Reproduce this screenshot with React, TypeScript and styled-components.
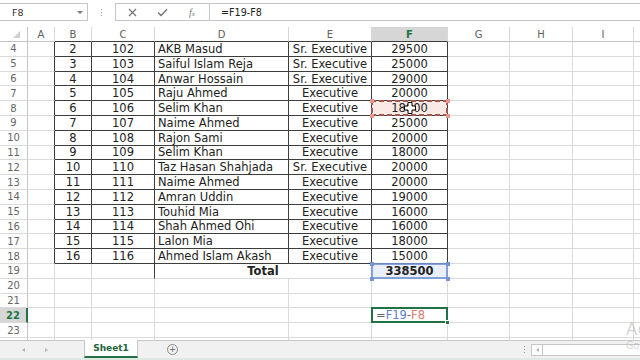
import React from 'react';
import styled, { createGlobalStyle, css } from 'styled-components';

const DARK = '#3d3d3d';
const GRID = '#dadada';
const GREEN = '#217346';
const BLUE = '#7394d6';
const RED = '#a5564f';
const RED_LIGHT = '#e8958c';

const GlobalStyle = createGlobalStyle`
  html, body { margin: 0; padding: 0; background: #fff; }
  body { font-family: "DejaVu Sans", "Liberation Sans", sans-serif; }
`;

const Window = styled.div`
  position: relative;
  width: 640px;
  height: 360px;
  overflow: hidden;
  display: flex;
  flex-direction: column;
  background: #fff;
`;

/* ---------- formula bar ---------- */
const FormulaBar = styled.div`
  height: 27px;
  flex-shrink: 0;
  box-sizing: border-box;
  padding-top: 3px;
  display: flex;
  align-items: flex-start;
`;

const NameBox = styled.div`
  width: 88px;
  height: 18px;
  box-sizing: border-box;
  border: 1px solid #c6c6c6;
  border-left: none;
  display: flex;
  align-items: center;
  justify-content: space-between;
  padding: 0 4px 0 12px;
  font-size: 9.5px;
  color: #333;
`;

const Caret = styled.span`
  width: 0;
  height: 0;
  border-left: 3px solid transparent;
  border-right: 3px solid transparent;
  border-top: 3px solid #777;
`;

const Grip = styled.div`
  width: 27px;
  height: 18px;
  display: flex;
  flex-direction: column;
  align-items: center;
  justify-content: center;
  gap: 2px;
`;

const GripDot = styled.span`
  width: 1px;
  height: 1px;
  background: #9a9a9a;
`;

const FxBox = styled.div`
  width: 95px;
  height: 18px;
  box-sizing: border-box;
  border: 1px solid #c6c6c6;
  display: flex;
  align-items: center;
  padding-left: 8px;
  gap: 14px;
`;

const FxIcon = styled.span`
  width: 16px;
  height: 16px;
  display: flex;
  align-items: center;
  justify-content: center;
  color: #777;
  font-family: "Liberation Serif", "DejaVu Serif", serif;
  font-style: italic;
  font-size: 10px;
`;

const FxSub = styled.span`
  font-size: 7px;
  margin-top: 3px;
`;

const FormulaInput = styled.div`
  flex: 1;
  height: 18px;
  box-sizing: border-box;
  border-top: 1px solid #c6c6c6;
  border-bottom: 1px solid #c6c6c6;
  display: flex;
  align-items: center;
  padding-left: 11px;
  font-size: 9.6px;
  color: #222;
`;

/* ---------- grid ---------- */
const Sheet = styled.div`
  flex: 1;
  min-height: 0;
  overflow: hidden;
  display: grid;
  grid-template-columns: 28px 27px 37px 63px 134px 83px 76px 62px 63px 61px 64px;
  grid-template-rows: 15px;
  grid-auto-rows: 14.8px;
  align-content: start;
`;

const Corner = styled.div`
  position: relative;
  box-sizing: border-box;
  border-right: 1px solid #c4c4c4;
  border-bottom: 1px solid #c4c4c4;
`;

const CornerTri = styled.span`
  position: absolute;
  right: 7px;
  bottom: 3px;
  width: 0;
  height: 0;
  border-left: 7px solid transparent;
  border-bottom: 7px solid #d0d0d0;
`;

const ColHeader = styled.div<{ $active?: boolean; $dark?: boolean }>`
  box-sizing: border-box;
  display: flex;
  align-items: center;
  justify-content: center;
  font-size: 10px;
  color: #606060;
  border-right: 1px solid #d8d8d8;
  border-bottom: 1px solid ${(p) => (p.$dark ? DARK : '#c4c4c4')};
  ${(p) =>
    p.$active &&
    css`
      background: #d6d6d6;
      color: ${GREEN};
      font-weight: 700;
      border-bottom: 1px solid ${DARK};
    `}
`;

const RowHeader = styled.div<{ $active?: boolean }>`
  box-sizing: border-box;
  display: flex;
  align-items: center;
  justify-content: center;
  font-size: 10px;
  color: #666;
  border-right: 1px solid #c4c4c4;
  border-bottom: 1px solid ${GRID};
  ${(p) =>
    p.$active &&
    css`
      background: #d6d6d6;
      color: ${GREEN};
      font-weight: 700;
      border-right: 2px solid ${GREEN};
    `}
`;

type Mark = 'point' | 'ref' | 'active';

const pointEdges = css`
  background:
    repeating-linear-gradient(90deg, ${RED} 0 5px, transparent 5px 8px) top left / 100% 2px no-repeat,
    repeating-linear-gradient(90deg, ${RED} 0 5px, transparent 5px 8px) bottom left / 100% 2px no-repeat,
    repeating-linear-gradient(180deg, ${RED} 0 5px, transparent 5px 8px) top left / 2px 100% no-repeat,
    repeating-linear-gradient(180deg, ${RED} 0 5px, transparent 5px 8px) top right / 2px 100% no-repeat;
`;

const Cell = styled.div<{
  $align?: 'left' | 'center';
  $bold?: boolean;
  $r?: boolean;
  $b?: boolean;
  $span?: number;
  $mark?: Mark;
}>`
  position: relative;
  box-sizing: border-box;
  display: flex;
  align-items: center;
  justify-content: ${(p) => (p.$align === 'left' ? 'flex-start' : 'center')};
  padding: 0 3px;
  grid-column: span ${(p) => p.$span ?? 1};
  border-right: 1px solid ${(p) => (p.$r ? DARK : GRID)};
  border-bottom: 1px solid ${(p) => (p.$b ? DARK : GRID)};
  font-size: 11.5px;
  font-weight: ${(p) => (p.$bold ? 700 : 400)};
  color: #222;
  white-space: nowrap;

  ${(p) =>
    p.$mark === 'point' &&
    css`
      background: #fbe9e6;
      &::after {
        content: '';
        position: absolute;
        top: -1px;
        left: -1px;
        right: -1px;
        bottom: -1px;
        ${pointEdges}
      }
    `}
  ${(p) =>
    p.$mark === 'ref' &&
    css`
      background: #e9eef9;
      &::after {
        content: '';
        position: absolute;
        top: -1px;
        left: -1px;
        right: -1px;
        bottom: -1px;
        border: 2px solid ${BLUE};
        opacity: 0.85;
      }
    `}
  ${(p) =>
    p.$mark === 'active' &&
    css`
      padding-left: 4px;
      &::after {
        content: '';
        position: absolute;
        top: -1px;
        left: -1px;
        right: -1px;
        bottom: -1px;
        border: 2px solid ${GREEN};
      }
    `}
`;

const Handle = styled.span<{ $pos: 'tl' | 'tr' | 'bl' | 'br'; $color: string }>`
  position: absolute;
  z-index: 2;
  width: 4px;
  height: 4px;
  background: ${(p) => p.$color};
  ${(p) => (p.$pos[0] === 't' ? 'top: -2px;' : 'bottom: -3px;')}
  ${(p) => (p.$pos[1] === 'l' ? 'left: -2px;' : 'right: -3px;')}
`;

const FillHandle = styled.span`
  position: absolute;
  z-index: 2;
  right: -3px;
  bottom: -3px;
  width: 5px;
  height: 5px;
  background: ${GREEN};
  border: 1px solid #fff;
  box-sizing: border-box;
`;

const CursorIcon = styled.svg`
  position: absolute;
  z-index: 3;
  left: 32px;
  top: 1px;
`;

const Ref = styled.span<{ $c: string }>`
  color: ${(p) => p.$c};
`;

/* ---------- tab bar ---------- */
const TabBar = styled.div`
  height: 20px;
  flex-shrink: 0;
  box-sizing: border-box;
  background: #f1f1f1;
  border-top: 1px solid #c6c6c6;
  border-bottom: 2px solid #dfe8e2;
  display: flex;
  align-items: stretch;
`;

const Nav = styled.div`
  width: 84px;
  display: flex;
  align-items: center;
  padding-left: 22px;
  gap: 20px;
  box-sizing: border-box;
`;

const NavArrow = styled.span<{ $dir: 'l' | 'r' }>`
  width: 0;
  height: 0;
  border-top: 2.5px solid transparent;
  border-bottom: 2.5px solid transparent;
  ${(p) =>
    p.$dir === 'l'
      ? 'border-right: 3px solid #b4b4b4;'
      : 'border-left: 3px solid #b4b4b4;'}
`;

const SheetTab = styled.div`
  width: 54px;
  margin-top: -1px;
  box-sizing: border-box;
  background: #fff;
  border-left: 1px solid #c6c6c6;
  border-right: 1px solid #c6c6c6;
  border-bottom: 2px solid ${GREEN};
  display: flex;
  align-items: center;
  justify-content: center;
  font-size: 9px;
  font-weight: 700;
  color: #22653c;
`;

const AddSheet = styled.div`
  margin-left: 29px;
  align-self: center;
  width: 11px;
  height: 11px;
  box-sizing: border-box;
  border: 1px solid #8a8a8a;
  border-radius: 50%;
  display: flex;
  align-items: center;
  justify-content: center;
  color: #6a6a6a;
  font-size: 9px;
  line-height: 1;
`;

const Spacer = styled.div`
  flex: 1;
`;

const TabGrip = styled.div`
  width: 14px;
  display: flex;
  flex-direction: column;
  align-items: center;
  justify-content: center;
  gap: 2px;
`;

const HScroll = styled.div`
  width: 109px;
  align-self: center;
  height: 12px;
  box-sizing: border-box;
  border: 1px solid #c6c6c6;
  border-right: none;
  background: #fff;
  display: flex;
  align-items: center;
`;

const ScrollBtn = styled.div`
  width: 11px;
  height: 100%;
  box-sizing: border-box;
  border-right: 1px solid #c6c6c6;
  display: flex;
  align-items: center;
  justify-content: center;
`;

const Watermark = styled.div`
  position: absolute;
  left: 626px;
  top: 317px;
  z-index: 5;
  color: rgba(170, 170, 170, 0.5);
  font-family: "Open Sans", "DejaVu Sans", sans-serif;
  white-space: nowrap;
  pointer-events: none;
`;

const WmTitle = styled.div`
  font-size: 18px;
  line-height: 22px;
`;

const WmSub = styled.div`
  font-size: 10px;
  line-height: 12px;
`;

/* ---------- data ---------- */
const COLS = ['A', 'B', 'C', 'D', 'E', 'F', 'G', 'H', 'I', 'J'];
const TABLE_COLS = ['B', 'C', 'D', 'E', 'F'];

const people: [number, number, string, string, number][] = [
  [2, 102, 'AKB Masud', 'Sr. Executive', 29500],
  [3, 103, 'Saiful Islam Reja', 'Sr. Executive', 25000],
  [4, 104, 'Anwar Hossain', 'Sr. Executive', 29000],
  [5, 105, 'Raju Ahmed', 'Executive', 20000],
  [6, 106, 'Selim Khan', 'Executive', 18000],
  [7, 107, 'Naime Ahmed', 'Executive', 25000],
  [8, 108, 'Rajon Sami', 'Executive', 20000],
  [9, 109, 'Selim Khan', 'Executive', 18000],
  [10, 110, 'Taz Hasan Shahjada', 'Sr. Executive', 20000],
  [11, 111, 'Naime Ahmed', 'Executive', 20000],
  [12, 112, 'Amran Uddin', 'Executive', 19000],
  [13, 113, 'Touhid Mia', 'Executive', 16000],
  [14, 114, 'Shah Ahmed Ohi', 'Executive', 16000],
  [15, 115, 'Lalon Mia', 'Executive', 18000],
  [16, 116, 'Ahmed Islam Akash', 'Executive', 15000],
];

const CellCursor = () => (
  <CursorIcon width="12" height="12" viewBox="0 0 12 12">
    <path
      d="M4 0.5 H8 V4 H11.5 V8 H8 V11.5 H4 V8 H0.5 V4 H4 Z"
      fill="#fff"
      stroke="#000"
      strokeWidth="1"
    />
  </CursorIcon>
);

const Formula = () => (
  <span>
    <Ref $c="#666">=</Ref>
    <Ref $c="#5a80cf">F19</Ref>
    <Ref $c="#a0605a">-</Ref>
    <Ref $c="#e0786c">F8</Ref>
  </span>
);

function renderRow(r: number) {
  const out: React.ReactNode[] = [];
  out.push(
    <RowHeader key={`h${r}`} $active={r === 22}>
      {r}
    </RowHeader>
  );
  const inTable = r >= 4 && r <= 18;
  const p = inTable ? people[r - 4] : null;

  COLS.forEach((c) => {
    const key = `${c}${r}`;
    if (r === 19 && c === 'E') return;
    let rDark = false;
    let bDark = false;
    if (inTable) {
      rDark = c === 'A' || TABLE_COLS.includes(c);
      bDark = TABLE_COLS.includes(c);
    }
    if (r === 19 && c === 'C') rDark = true;

    if (p) {
      if (c === 'B') {
        out.push(<Cell key={key} $r={rDark} $b={bDark}>{p[0]}</Cell>);
        return;
      }
      if (c === 'C') {
        out.push(<Cell key={key} $r={rDark} $b={bDark}>{p[1]}</Cell>);
        return;
      }
      if (c === 'D') {
        out.push(
          <Cell key={key} $r={rDark} $b={bDark} $align="left">
            {p[2]}
          </Cell>
        );
        return;
      }
      if (c === 'E') {
        out.push(<Cell key={key} $r={rDark} $b={bDark}>{p[3]}</Cell>);
        return;
      }
      if (c === 'F') {
        const isPoint = r === 8;
        out.push(
          <Cell key={key} $r={rDark} $b={bDark} $mark={isPoint ? 'point' : undefined}>
            {p[4]}
            {isPoint && (
              <>
                <Handle $pos="tl" $color={RED_LIGHT} />
                <Handle $pos="tr" $color={RED_LIGHT} />
                <Handle $pos="bl" $color={RED_LIGHT} />
                <Handle $pos="br" $color={RED_LIGHT} />
                <CellCursor />
              </>
            )}
          </Cell>
        );
        return;
      }
    }
    if (r === 19 && c === 'D') {
      out.push(
        <Cell key={key} $span={2} $bold>
          Total
        </Cell>
      );
      return;
    }
    if (r === 19 && c === 'F') {
      out.push(
        <Cell key={key} $bold $mark="ref">
          338500
          <Handle $pos="tl" $color={BLUE} />
          <Handle $pos="tr" $color={BLUE} />
          <Handle $pos="bl" $color={BLUE} />
          <Handle $pos="br" $color={BLUE} />
        </Cell>
      );
      return;
    }
    if (r === 22 && c === 'F') {
      out.push(
        <Cell key={key} $align="left" $mark="active">
          <Formula />
          <FillHandle />
        </Cell>
      );
      return;
    }
    out.push(<Cell key={key} $r={rDark} $b={bDark} />);
  });
  return out;
}

export default function App() {
  const rows: number[] = [];
  for (let r = 4; r <= 24; r++) rows.push(r);

  return (
    <>
      <GlobalStyle />
      <Window>
        <FormulaBar>
          <NameBox>
            F8
            <Caret />
          </NameBox>
          <Grip>
            <GripDot />
            <GripDot />
            <GripDot />
          </Grip>
          <FxBox>
            <FxIcon>
              <svg width="9" height="9" viewBox="0 0 9 9">
                <path d="M1 1 L8 8 M8 1 L1 8" stroke="#6f6f6f" strokeWidth="1.1" fill="none" />
              </svg>
            </FxIcon>
            <FxIcon>
              <svg width="11" height="9" viewBox="0 0 11 9">
                <path d="M1 4.5 L4 7.5 L10 1.2" stroke="#6f6f6f" strokeWidth="1.3" fill="none" />
              </svg>
            </FxIcon>
            <FxIcon>
              f<FxSub>x</FxSub>
            </FxIcon>
          </FxBox>
          <FormulaInput>=F19-F8</FormulaInput>
        </FormulaBar>

        <Sheet>
          <Corner>
            <CornerTri />
          </Corner>
          {COLS.map((c) => (
            <ColHeader key={c} $active={c === 'F'} $dark={TABLE_COLS.includes(c)}>
              {c}
            </ColHeader>
          ))}
          {rows.map((r) => renderRow(r))}
        </Sheet>

        <TabBar>
          <Nav>
            <NavArrow $dir="l" />
            <NavArrow $dir="r" />
          </Nav>
          <SheetTab>Sheet1</SheetTab>
          <AddSheet>+</AddSheet>
          <Spacer />
          <TabGrip>
            <GripDot />
            <GripDot />
            <GripDot />
          </TabGrip>
          <HScroll>
            <ScrollBtn>
              <NavArrow $dir="l" />
            </ScrollBtn>
          </HScroll>
        </TabBar>

        <Watermark>
          <WmTitle>Activate Windows</WmTitle>
          <WmSub>Go to Settings to activate Windows.</WmSub>
        </Watermark>
      </Window>
    </>
  );
}
